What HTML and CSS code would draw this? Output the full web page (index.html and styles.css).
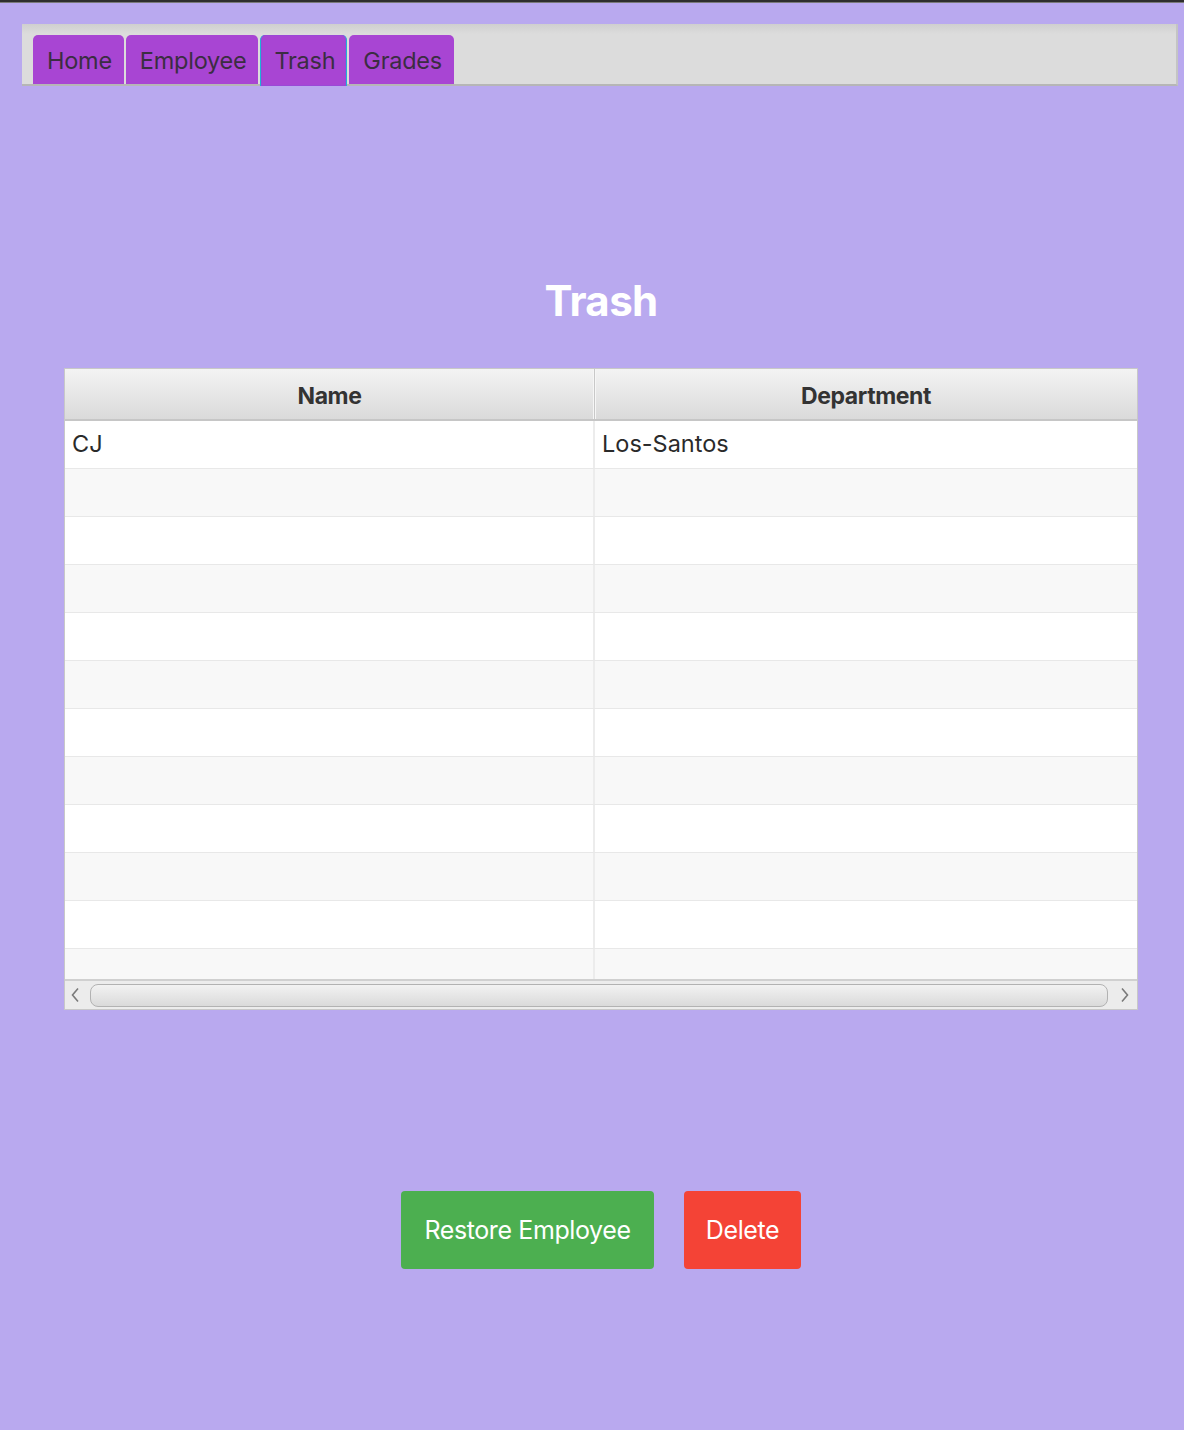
FILE: index.html
```html
<!DOCTYPE html>
<html>
<head>
<meta charset="utf-8">
<link rel="stylesheet" href="styles.css">
</head>
<body>
<div class="topline"></div>
<div class="page">
  <div class="tabbar">
    <div class="tab">Home</div>
    <div class="tab">Employee</div>
    <div class="tab selected">Trash</div>
    <div class="tab">Grades</div>
  </div>
  <h1 class="title">Trash</h1>
  <div class="table">
    <div class="thead">
      <div class="th col1">Name</div>
      <div class="th col2">Department</div>
    </div>
    <div class="tbody">
      <div class="row"><div class="td col1">CJ</div><div class="td col2">Los-Santos</div></div>
      <div class="row alt"><div class="td col1"></div><div class="td col2"></div></div>
      <div class="row"><div class="td col1"></div><div class="td col2"></div></div>
      <div class="row alt"><div class="td col1"></div><div class="td col2"></div></div>
      <div class="row"><div class="td col1"></div><div class="td col2"></div></div>
      <div class="row alt"><div class="td col1"></div><div class="td col2"></div></div>
      <div class="row"><div class="td col1"></div><div class="td col2"></div></div>
      <div class="row alt"><div class="td col1"></div><div class="td col2"></div></div>
      <div class="row"><div class="td col1"></div><div class="td col2"></div></div>
      <div class="row alt"><div class="td col1"></div><div class="td col2"></div></div>
      <div class="row"><div class="td col1"></div><div class="td col2"></div></div>
      <div class="row alt"><div class="td col1"></div><div class="td col2"></div></div>
    </div>
    <div class="hscroll">
      <svg class="arrow" width="10" height="16" viewBox="0 0 10 16"><path d="M8 1.5 L2.5 8 L8 14.5" fill="none" stroke="#7a7a7a" stroke-width="1.6"/></svg>
      <div class="thumb"></div>
      <svg class="arrow" width="10" height="16" viewBox="0 0 10 16"><path d="M2 1.5 L7.5 8 L2 14.5" fill="none" stroke="#7a7a7a" stroke-width="1.6"/></svg>
    </div>
  </div>
  <div class="actions">
    <button class="btn restore">Restore Employee</button>
    <button class="btn delete">Delete</button>
  </div>
</div>
</body>
</html>
```
FILE: styles.css
```css
html, body {
  margin: 0;
  padding: 0;
}
body {
  background: #b9a9ef;
  font-family: Inter, "Noto Sans", "Liberation Sans", sans-serif;
  height: 1430px;
  overflow: hidden;
}
.topline {
  height: 3px;
  background: linear-gradient(#2e2e2e 0, #2e2e2e 2px, #7a7a7a 2px);
}
.page {
  display: flex;
  flex-direction: column;
  align-items: center;
  padding-top: 21px;
  padding-left: 18px;
}
.tabbar {
  align-self: flex-start;
  margin-left: 4px;
  box-sizing: border-box;
  width: 1156px;
  height: 62px;
  padding: 11px 0 0 11px;
  background: linear-gradient(#cfcfcf 0, #dcdcdc 10px, #dcdcdc 100%);
  border-right: 2px solid #c4c4c4;
  border-bottom: 2px solid #b6b6b6;
  display: flex;
  align-items: flex-end;
  gap: 2px;
}
.tab {
  height: 49px;
  background: #a845d3;
  border-radius: 5px 5px 0 0;
  padding: 2px 12px 0 14px;
  display: flex;
  align-items: center;
  font-size: 23.5px;
  letter-spacing: -0.25px;
  color: #3b2d42;
  box-sizing: border-box;
}
.tab.selected {
  height: 51px;
  margin-bottom: -2px;
  border-left: 1px solid #1fb2d6;
  border-right: 1px solid #1fb2d6;
  padding: 0 11px 0 13px;
  box-shadow: inset 0 0 0 1px #9b48d6;
}
.title {
  margin: 194px 0 0 0;
  height: 42px;
  line-height: 42px;
  font-size: 42px;
  font-weight: 700;
  color: #ffffff;
  letter-spacing: -0.6px;
}
.table {
  margin-top: 46px;
  width: 1074px;
  border: 1px solid #c8c8c8;
  box-sizing: border-box;
  background: #fff;
  display: flex;
  flex-direction: column;
}
.thead {
  display: flex;
  height: 52px;
  border-bottom: 2px solid #c6c6c6;
  box-sizing: border-box;
  background: linear-gradient(#f3f3f3, #dadada);
}
.th {
  display: flex;
  align-items: center;
  justify-content: center;
  padding-top: 3px;
  font-size: 23px;
  font-weight: 700;
  color: #333;
  letter-spacing: -0.4px;
  box-sizing: border-box;
}
.th.col1 {
  width: 530px;
  border-right: 1px solid #c8c8c8;
  box-shadow: inset -1px 0 0 #f6f6f6;
}
.th.col2 {
  flex: 1;
  box-shadow: inset 1px 0 0 #f6f6f6;
}
.tbody {
  height: 558px;
  overflow: hidden;
}
.row {
  display: flex;
  height: 48px;
  box-sizing: border-box;
  border-bottom: 1px solid #e8e8e8;
  background: #fff;
}
.row.alt {
  background: #f8f8f8;
}
.td {
  box-sizing: border-box;
  display: flex;
  align-items: center;
  padding-bottom: 3px;
  font-size: 23.5px;
  color: #2a2a2a;
  padding-left: 7px;
}
.td.col1 {
  width: 530px;
  border-right: 2px solid #ececec;
}
.td.col2 {
  flex: 1;
}
.hscroll {
  height: 30px;
  box-sizing: border-box;
  border-top: 2px solid #d0d0d0;
  background: #ececec;
  display: flex;
  align-items: center;
  padding: 0 7px 0 5px;
  gap: 10px;
}
.arrow {
  flex: none;
}
.thumb {
  flex: 1;
  height: 23px;
  box-sizing: border-box;
  border: 1px solid #b2b2b2;
  border-radius: 8px;
  background: linear-gradient(#f2f2f2, #dadada);
  margin-right: 2px;
}
.actions {
  margin-top: 181px;
  display: flex;
  gap: 30px;
}
.btn {
  height: 78px;
  border: none;
  border-radius: 4px;
  font-family: Inter, "Noto Sans", "Liberation Sans", sans-serif;
  font-size: 25px;
  color: #fff;
  padding: 0;
  white-space: nowrap;
  letter-spacing: -0.4px;
}
.btn.restore {
  background: #4caf50;
  width: 253px;
}
.btn.delete {
  background: #f44336;
  width: 117px;
}
```
